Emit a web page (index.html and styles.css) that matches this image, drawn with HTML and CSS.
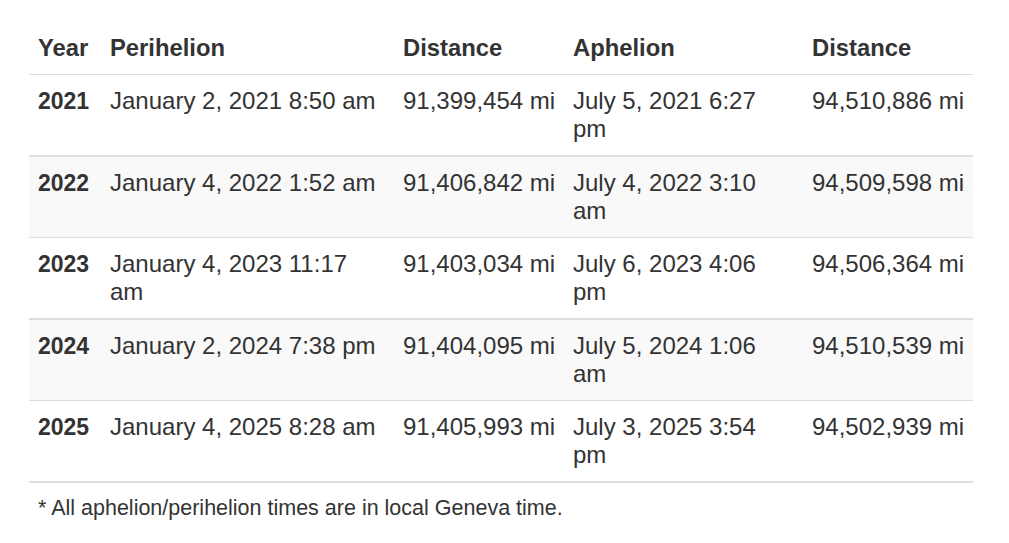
FILE: index.html
```html
<!DOCTYPE html>
<html>
<head>
<meta charset="utf-8">
<link rel="stylesheet" href="styles.css">
</head>
<body>
<div class="wrap">
  <table class="tbl">
    <thead>
      <tr>
        <th class="c-year">Year</th>
        <th class="c-peri">Perihelion</th>
        <th class="c-dist">Distance</th>
        <th class="c-aph">Aphelion</th>
        <th class="c-dist2">Distance</th>
      </tr>
    </thead>
    <tbody>
      <tr><td class="yr">2021</td><td class="peri">January 2, 2021 8:50 am</td><td>91,399,454 mi</td><td class="aph">July 5, 2021 6:27 pm</td><td>94,510,886 mi</td></tr>
      <tr><td class="yr">2022</td><td class="peri">January 4, 2022 1:52 am</td><td>91,406,842 mi</td><td class="aph">July 4, 2022 3:10 am</td><td>94,509,598 mi</td></tr>
      <tr><td class="yr">2023</td><td class="peri">January 4, 2023 11:17 am</td><td>91,403,034 mi</td><td class="aph">July 6, 2023 4:06 pm</td><td>94,506,364 mi</td></tr>
      <tr><td class="yr">2024</td><td class="peri">January 2, 2024 7:38 pm</td><td>91,404,095 mi</td><td class="aph">July 5, 2024 1:06 am</td><td>94,510,539 mi</td></tr>
      <tr><td class="yr">2025</td><td class="peri">January 4, 2025 8:28 am</td><td>91,405,993 mi</td><td class="aph">July 3, 2025 3:54 pm</td><td>94,502,939 mi</td></tr>
    </tbody>
  </table>
  <p class="note">* All aphelion/perihelion times are in local Geneva time.</p>
</div>
</body>
</html>
```
FILE: styles.css
```css
html, body {
  margin: 0;
  padding: 0;
  background: #fff;
}
body {
  font-family: "Liberation Sans", Arial, sans-serif;
  color: #333;
  font-size: 24px;
  line-height: 28px;
}
.wrap {
  padding: 22px 29px 0 29px;
  width: 944px;
}
.tbl {
  width: 944px;
  border-collapse: collapse;
  border-spacing: 0;
  table-layout: fixed;
  border-bottom: 2px solid #ddd;
}
.tbl th,
.tbl td {
  padding: 12px 8px 12px 9px;
  text-align: left;
  vertical-align: top;
}
.tbl th {
  font-weight: bold;
  font-size: 23.8px;
  border-bottom: 1px solid #ddd;
}
.tbl td {
  border-top: 1px solid #ddd;
}
.tbl tbody tr:nth-child(even) td {
  background: #f9f9f9;
  border-top-width: 2px;
}
.c-year { width: 55px; }
.c-peri { width: 276px; }
.c-dist { width: 153px; }
.c-aph { width: 222px; }
.c-dist2 { width: 153px; }
.tbl td.peri {
  padding-right: 12px;
}
.tbl td.aph {
  padding-right: 30px;
}
.yr {
  font-weight: bold;
  font-size: 23px;
}
.note {
  margin: 11px 0 0 0;
  padding: 0 9px;
  font-size: 21.5px;
}
```
